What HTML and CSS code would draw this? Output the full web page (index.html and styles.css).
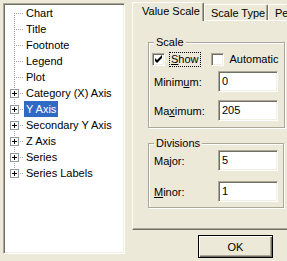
FILE: index.html
```html
<!DOCTYPE html>
<html lang="en">
<head>
    <meta charset="UTF-8">
    <title>Axis Properties</title>
    <link rel="stylesheet" href="styles.css">
</head>
<body>

<div class="dialog">
    <ul class="tree">
        <li class="node first"><span class="twig"></span><span class="name">Chart</span></li>
        <li class="node"><span class="twig"></span><span class="name">Title</span></li>
        <li class="node"><span class="twig"></span><span class="name">Footnote</span></li>
        <li class="node"><span class="twig"></span><span class="name">Legend</span></li>
        <li class="node"><span class="twig"></span><span class="name">Plot</span></li>
        <li class="node"><span class="twig"><span class="plus"></span></span><span class="name">Category (X) Axis</span></li>
        <li class="node"><span class="twig"><span class="plus"></span></span><span class="name selected">Y Axis</span></li>
        <li class="node"><span class="twig"><span class="plus"></span></span><span class="name">Secondary Y Axis</span></li>
        <li class="node"><span class="twig"><span class="plus"></span></span><span class="name">Z Axis</span></li>
        <li class="node"><span class="twig"><span class="plus"></span></span><span class="name">Series</span></li>
        <li class="node last"><span class="twig"><span class="plus"></span></span><span class="name">Series Labels</span></li>
    </ul>

    <div class="props">
        <div class="tabs">
            <span class="tab active">Value Scale</span>
            <span class="tab tab-type">Scale Type</span>
            <span class="tab">Pe</span>
        </div>

        <div class="panel">
            <fieldset class="group group-scale">
                <legend>Scale</legend>
                <div class="checks">
                    <span class="check"><span class="box checked"></span><span class="cap focus"><u>S</u>how</span></span>
                    <span class="check check-auto"><span class="box"></span><span class="cap">Automatic</span></span>
                </div>
                <div class="field"><span class="label">Minim<u>u</u>m:</span><span class="edit">0</span></div>
                <div class="field"><span class="label">Ma<u>x</u>imum:</span><span class="edit">205</span></div>
            </fieldset>

            <fieldset class="group group-div">
                <legend>Divisions</legend>
                <div class="field"><span class="label">Major:</span><span class="edit">5</span></div>
                <div class="field"><span class="label"><u>M</u>inor:</span><span class="edit">1</span></div>
            </fieldset>
        </div>

        <div class="buttons">
            <button class="btn default">OK</button>
        </div>
    </div>
</div>

</body>
</html>
```

FILE: styles.css
```css
* {
    box-sizing: border-box;
}

body {
    margin: 0;
    width: 287px;
    height: 261px;
    overflow: hidden;
    background: #ECE9D8;
    font: 11px "Liberation Sans", Arial, sans-serif;
    color: #000;
}

.dialog {
    display: flex;
    align-items: flex-start;
    width: 287px;
    height: 261px;
    overflow: hidden;
}

/* Tree on the left */
.tree {
    flex-shrink: 0;
    margin: 3px 0 0 3px;
    padding: 1px;
    list-style: none;
    width: 122px;
    height: 251px;
    background: #fff;
    border: 1px solid;
    border-color: #ACA899 #fff #fff #ACA899;
    box-shadow: inset 1px 1px #716F64, inset -1px -1px #F1EFE2;
}

.node {
    display: flex;
    align-items: center;
    height: 16px;
}

.twig {
    display: flex;
    align-items: center;
    width: 19px;
    height: 16px;
    flex-shrink: 0;
    background:
        repeating-linear-gradient(to bottom, #A0A0A0 0 1px, transparent 1px 2px) 9px 0 / 1px 16px no-repeat,
        repeating-linear-gradient(to right, #A0A0A0 0 1px, transparent 1px 2px) 9px 8px / 10px 1px no-repeat;
}

.first .twig {
    background-position: 9px 8px, 9px 8px;
    background-size: 1px 8px, 10px 1px;
}

.last .twig {
    background-size: 1px 9px, 10px 1px;
}

.plus {
    width: 9px;
    height: 9px;
    margin-left: 5px;
    border: 1px solid #919B9C;
    background:
        linear-gradient(#000, #000) center / 5px 1px no-repeat,
        linear-gradient(#000, #000) center / 1px 5px no-repeat,
        #fff;
}

.name {
    height: 16px;
    line-height: 16px;
    padding: 0 2px;
    white-space: nowrap;
}

.name.selected {
    background: #316AC5;
    color: #fff;
}

/* Property pages */
.props {
    flex-shrink: 0;
    margin-left: 7px;
    width: 165px;
}

.tabs {
    display: flex;
    align-items: flex-end;
    height: 20px;
}

.tab {
    height: 16px;
    padding: 2px 0 0 6px;
    line-height: 13px;
    white-space: nowrap;
    border-top: 1px solid #fff;
    border-left: 1px solid #fff;
    border-right: 1px solid #716F64;
    border-radius: 2px 2px 0 0;
    box-shadow: inset -1px 0 #ACA899;
    flex-shrink: 0;
}

.tab.active {
    position: relative;
    z-index: 1;
    width: 72px;
    height: 19px;
    margin-bottom: -1px;
    padding-left: 9px;
    background: #ECE9D8;
}

.tab-type {
    width: 64px;
}

.panel {
    height: 210px;
    padding: 15px 0 0 15px;
    border-top: 1px solid #fff;
    border-left: 1px solid #fff;
    border-bottom: 1px solid #716F64;
    box-shadow: inset 0 -1px #ACA899;
}

.group {
    width: 136px;
    margin: 0;
    padding: 0 5px 6px;
    border: 1px solid #ACA899;
    box-shadow: inset 1px 1px #fff, 1px 1px #fff;
}

.group legend {
    padding: 0 2px;
    line-height: 13px;
    background: #ECE9D8;
}

.group-div {
    margin-top: 9px;
}

.checks {
    display: flex;
    align-items: center;
    height: 13px;
    margin: 4px 0 5px -2px;
}

.check {
    display: flex;
    align-items: center;
}

.check-auto {
    margin-left: 11px;
}

.box {
    width: 13px;
    height: 13px;
    background: #fff;
    border: 1px solid;
    border-color: #ACA899 #fff #fff #ACA899;
    box-shadow: inset 1px 1px #716F64, inset -1px -1px #F1EFE2;
}

.box.checked {
    background:
        url("data:image/svg+xml,%3Csvg xmlns='http://www.w3.org/2000/svg' width='11' height='11'%3E%3Cpath d='M2 4v3l2 2 5-5V1L4 6z' fill='%23000'/%3E%3C/svg%3E") 0 0 / 11px 11px no-repeat,
        #fff;
}

.cap {
    margin-left: 5px;
    padding: 0 1px;
    line-height: 13px;
    white-space: nowrap;
}

.cap.focus {
    outline: 1px dotted #000;
}

.field {
    display: flex;
    align-items: center;
    height: 21px;
    margin-top: 8px;
}

.checks + .field {
    margin-top: 0;
}

.label {
    width: 64px;
    flex-shrink: 0;
    white-space: nowrap;
}

.edit {
    width: 60px;
    height: 21px;
    padding: 2px 0 0 3px;
    line-height: 14px;
    background: #fff;
    border: 1px solid;
    border-color: #ACA899 #fff #fff #ACA899;
    box-shadow: inset 1px 1px #716F64, inset -1px -1px #F1EFE2;
}

.group-div .field {
    margin-top: 10px;
}

.group-div .field:first-of-type {
    margin-top: 0;
}

.group-div {
    padding-bottom: 5px;
}

.buttons {
    padding: 5px 0 0 66px;
}

.btn {
    display: block;
    width: 75px;
    height: 23px;
    padding: 0;
    font: inherit;
    color: #000;
    background: #ECE9D8;
    border: 1px solid #000;
    box-shadow: inset 1px 1px #fff, inset -1px -1px #716F64, inset -2px -2px #ACA899;
}
```
